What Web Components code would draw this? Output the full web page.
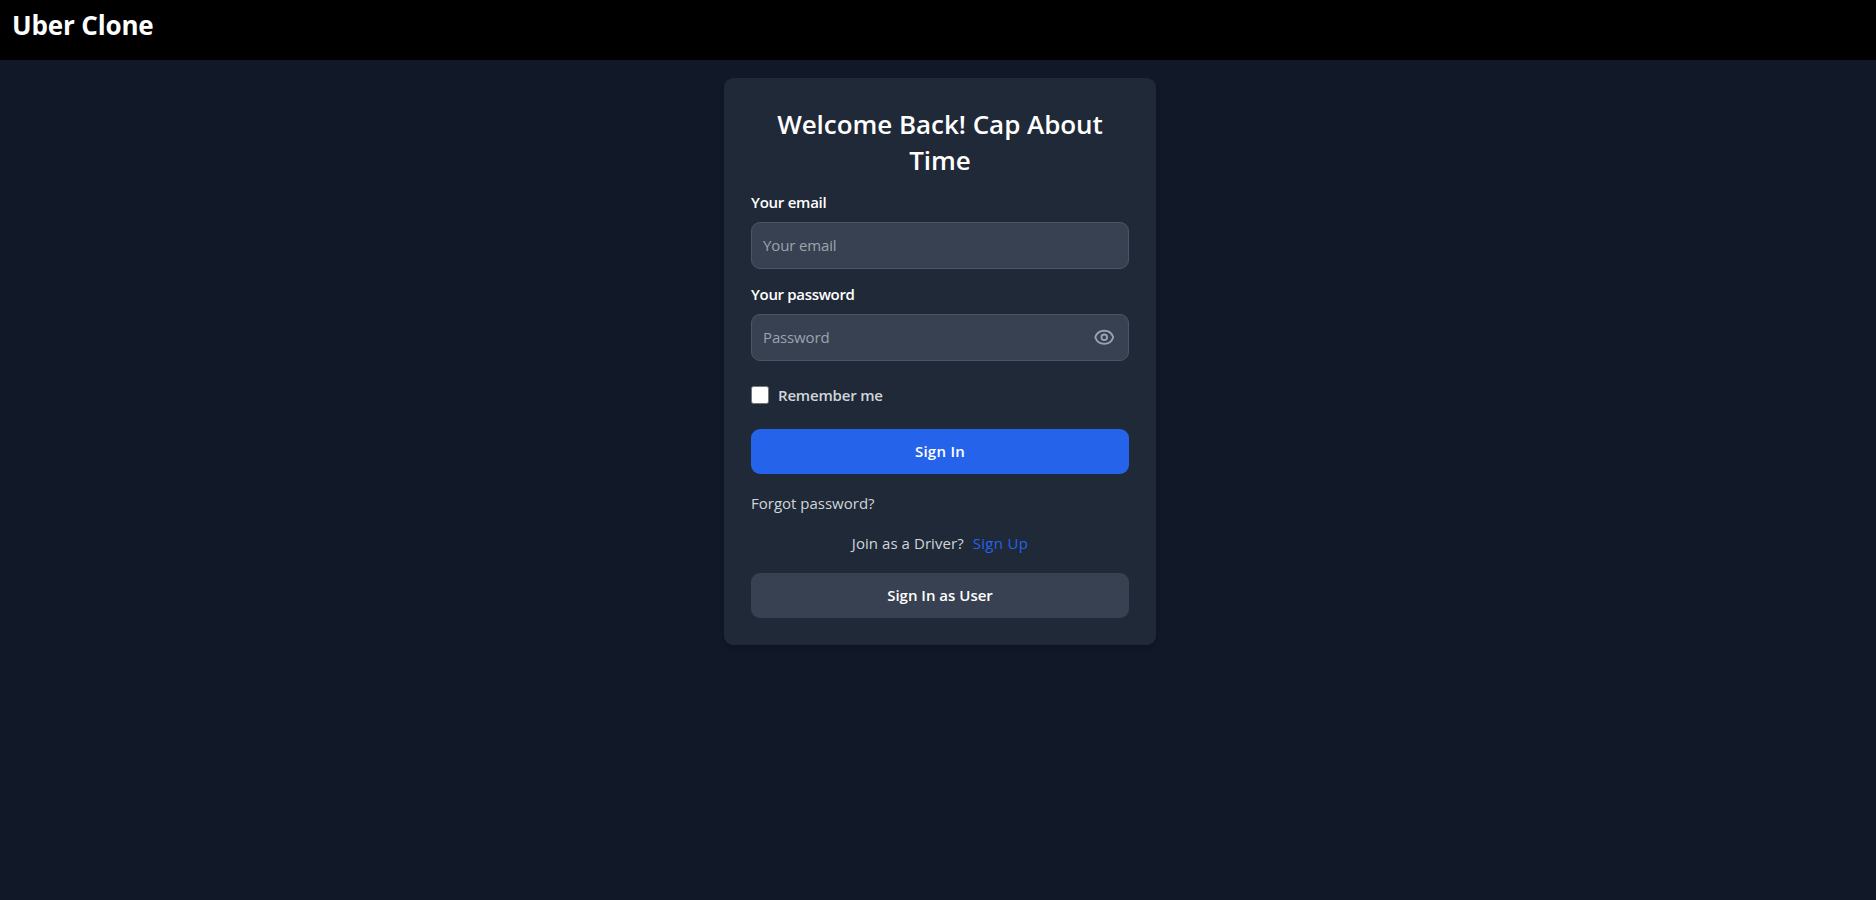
<!DOCTYPE html>
<html lang="en">
<head>
<meta charset="utf-8">
<title>Uber Clone</title>
<style>
html{font-size:18px}
body{margin:0;height:100vh;overflow:hidden;background:#111827;font:15px/22px "Open Sans","Noto Sans",sans-serif;color:#fff}
</style>
</head>
<body>
<app-page></app-page>
<script>
function define(name, html){
  customElements.define(name, class extends HTMLElement{
    constructor(){
      super();
      const t=document.createElement('template');
      t.innerHTML=html;
      this.attachShadow({mode:'open'}).append(t.content.cloneNode(true));
    }
  });
}
define('app-header',`<style>
:host{display:block;box-sizing:border-box;height:60px;padding:7px 12px;background:#000}
h1{margin:0;font-size:26px;line-height:36px;font-weight:700;letter-spacing:-.15px}
</style><h1><slot></slot></h1>`);
define('eye-icon',`<style>
:host{display:block;width:22.5px;height:22.5px;color:#9ca3af}svg{display:block;width:100%;height:100%}
</style><svg viewBox="0 0 24 24" fill="none" stroke="currentColor" stroke-width="2" stroke-linecap="round" stroke-linejoin="round"><path d="M15 12a3 3 0 11-6 0 3 3 0 016 0z"/><path d="M2.458 12C3.732 7.943 7.523 5 12 5c4.478 0 8.268 2.943 9.542 7-1.274 4.057-5.064 7-9.542 7-4.477 0-8.268-2.943-9.542-7z"/></svg>`);
define('form-field',`<style>
:host{display:block;margin-top:14px}
.label{display:block;margin-bottom:9px;font-weight:600;letter-spacing:var(--label-spacing,0)}
.box{box-sizing:border-box;display:flex;align-items:center;justify-content:space-between;height:47px;padding:0 12.5px 0 11px;border:1px solid #4b5563;border-radius:9px;background:#374151;color:#9ca3af;letter-spacing:-.14px}
.value{padding-bottom:2px}
</style><span class="label"><slot name="label"></slot></span><div class="box"><span class="value"><slot></slot></span><slot name="icon"></slot></div>`);
define('check-option',`<style>
:host{display:flex;align-items:center;gap:9px;margin:23px 0;color:#d1d5db;font-weight:600;letter-spacing:-.18px}
i{box-sizing:border-box;width:18px;height:18px;border:1px solid #767676;border-radius:2.5px;background:#fff}
</style><i></i><span><slot></slot></span>`);
define('action-button',`<style>
:host{display:block}
button{display:block;width:100%;height:45px;padding:0 0 2px;border:0;border-radius:9px;background:var(--fill,#374151);color:#fff;font:inherit;font-weight:600;letter-spacing:var(--spacing,0)}
</style><button><slot></slot></button>`);
define('login-card',`<style>
:host{display:block;box-sizing:border-box;width:432px;margin:18px auto 0;padding:27px;border-radius:9px;background:#1f2937;box-shadow:0 4px 6px -1px rgba(0,0,0,.1),0 2px 4px -2px rgba(0,0,0,.1)}
h2{margin:0;padding-top:1px;text-align:center;font-size:26px;line-height:36px;font-weight:600;letter-spacing:-.04px}
.first{--label-spacing:-.25px;margin-top:13px}.second{--label-spacing:-.32px}
.primary{--fill:#2563eb;--spacing:.28px}
.forgot{margin:18px 0;color:#d1d5db}
.join{display:flex;justify-content:center;gap:9px;margin-bottom:19px;color:#d1d5db;letter-spacing:.06px}
.join b{font-weight:400;color:#2563eb;letter-spacing:.3px}
</style>
<h2>Welcome Back! Cap About Time</h2>
<form-field class="first"><span slot="label">Your email</span>Your email</form-field>
<form-field class="second"><span slot="label">Your password</span>Password<eye-icon slot="icon"></eye-icon></form-field>
<check-option>Remember me</check-option>
<action-button class="primary">Sign In</action-button>
<div class="forgot">Forgot password?</div>
<div class="join"><span>Join as a Driver?</span><b>Sign Up</b></div>
<action-button>Sign In as User</action-button>`);
define('app-page',`<style>:host{display:flow-root;min-height:900px;background:#111827}main{padding-left:4px}</style>
<app-header>Uber Clone</app-header><main><login-card></login-card></main>`);
</script>
</body>
</html>
